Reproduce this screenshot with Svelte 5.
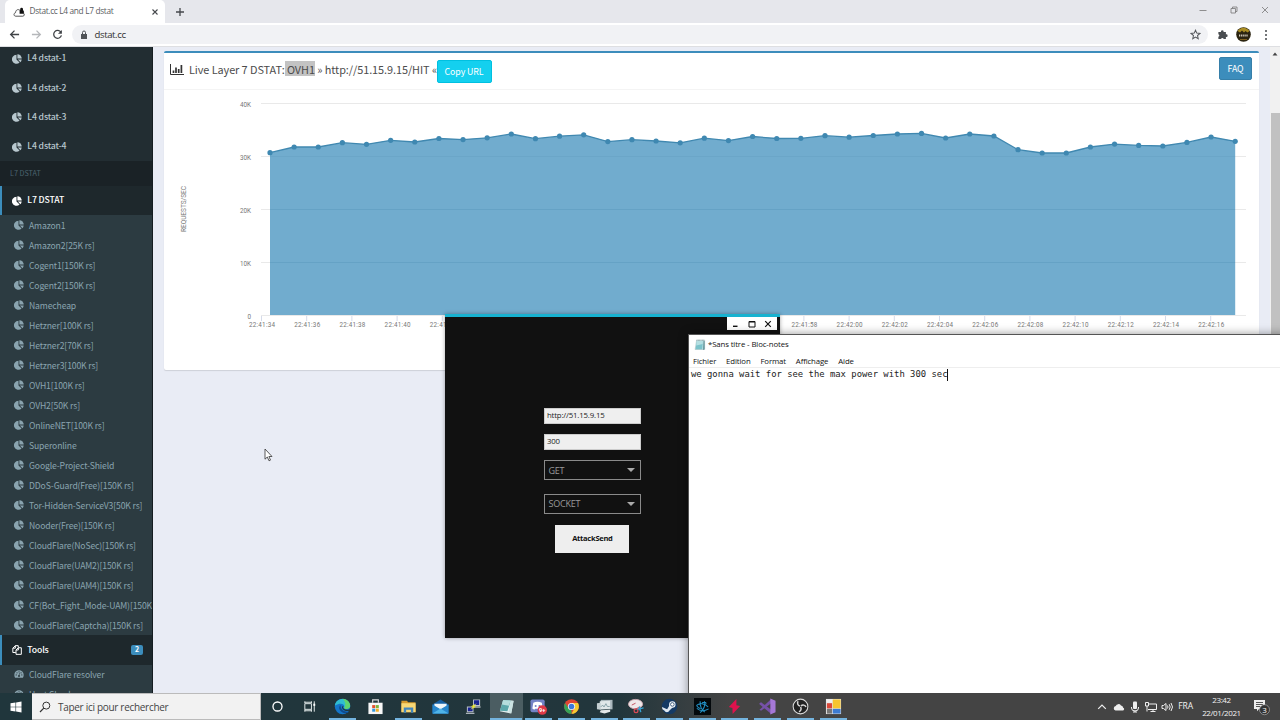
<script>
    const l4 = ['L4 dstat-1', 'L4 dstat-2', 'L4 dstat-3', 'L4 dstat-4'];
    const l7 = [
        'Amazon1', 'Amazon2[25K rs]', 'Cogent1[150K rs]', 'Cogent2[150K rs]', 'Namecheap',
        'Hetzner[100K rs]', 'Hetzner2[70K rs]', 'Hetzner3[100K rs]', 'OVH1[100K rs]', 'OVH2[50K rs]',
        'OnlineNET[100K rs]', 'Superonline', 'Google-Project-Shield', 'DDoS-Guard(Free)[150K rs]',
        'Tor-Hidden-ServiceV3[50K rs]', 'Nooder(Free)[150K rs]', 'CloudFlare(NoSec)[150K rs]',
        'CloudFlare(UAM2)[150K rs]', 'CloudFlare(UAM4)[150K rs]', 'CF(Bot_Fight_Mode-UAM)[150K',
        'CloudFlare(Captcha)[150K rs]'
    ];
    const tools = ['CloudFlare resolver', 'Host Check'];

    // chart
    const heights = [
        152.7, 147, 147, 142.7, 144.3, 140.3, 142, 138.5, 139.6, 137.8, 134, 138.7, 136.2, 134.8,
        141.6, 139.7, 141, 142.8, 138.2, 140.6, 136.5, 138.5, 138.3, 135.7, 137.2, 135.5, 134, 133.4,
        138, 134, 136, 149.7, 153, 153, 147, 144.1, 145.4, 146, 142.4, 137, 141.3
    ];
    const points = heights.map((y, i) => ({ x: 270 + i * 24.13, y }));
    const line = points.map((p) => `${p.x.toFixed(1)},${p.y}`).join(' ');
    const grid = [
        { y: 103.5, label: '40K' },
        { y: 156.5, label: '30K' },
        { y: 209.5, label: '20K' },
        { y: 262.5, label: '10K' },
        { y: 315.5, label: '0' }
    ];
    const ticks = Array.from({ length: 22 }, (_, i) => {
        const s = 34 + i * 2;
        return { x: 262 + i * 45.2, label: `22:${s < 60 ? 41 : 42}:${String(s % 60).padStart(2, '0')}` };
    });

    const menu = ['Fichier', 'Edition', 'Format', 'Affichage', 'Aide'];

    const apps = [
        { name: 'cortana' }, { name: 'view' }, { name: 'edge', open: true }, { name: 'store' },
        { name: 'explorer', open: true }, { name: 'mail' }, { name: 'putty' },
        { name: 'notepad', open: true, active: true }, { name: 'discord', open: true },
        { name: 'chrome', open: true }, { name: 'monitor', open: true }, { name: 'snip', open: true },
        { name: 'steam', open: true }, { name: 'bnet', open: true }, { name: 'bolt', open: true },
        { name: 'vs', open: true }, { name: 'obs', open: true }, { name: 'forms', open: true }
    ];
</script>

{#snippet pie()}
    <svg class="pie" viewBox="0 0 16 16">
        <path fill="currentColor" d="M7.200 1.200v7.400l4.900 5A7.200 7.200 0 1 1 7.200 1.200z" />
        <path fill="currentColor" d="M8.600 0.300A7 7 0 0 1 15.600 7.200H8.600z" />
        <path fill="currentColor" d="M9.300 8.800h6.200a7.300 7.300 0 0 1-2 4.200z" />
    </svg>
{/snippet}

{#snippet gauge()}
    <svg class="pie" viewBox="0 0 16 16">
        <path fill="currentColor" d="M8 2a7.500 7.500 0 0 0-7.500 7.500c0 1.700.500 3 1.200 4.300h12.600c.700-1.300 1.200-2.600 1.200-4.300A7.500 7.500 0 0 0 8 2z" />
        <g fill="#2c3b41"><circle cx="3.500" cy="9.500" r="1" /><circle cx="4.800" cy="6" r="1" /><circle cx="8" cy="4.500" r="1" /><circle cx="11.300" cy="6" r="1" /><circle cx="12.500" cy="9.500" r="1" /><circle cx="8" cy="11" r="1.600" /></g>
        <path stroke="#2c3b41" d="M8 11l1.200-5" />
    </svg>
{/snippet}

{#snippet notepad()}
    <svg viewBox="0 0 16 16">
        <path fill="#d5ecee" stroke="#8fa9ac" stroke-width=".6" d="M3.500 1.500h10.700v12.500H1.500z" />
        <path fill="#7cc3ca" d="M3.800 2.500h8.200l-.8 11H2z" />
        <path fill="#b5dfe2" d="M3.800 2.500h8.200l-.3 4-8.600 2z" />
        <path stroke="#5c7d82" stroke-width=".9" stroke-dasharray="1 .8" d="M3.500 1.700h10" />
        <path fill="#5b8d93" d="M12.600 2.500h1.500v11.200l-2 .8z" />
    </svg>
{/snippet}

<div class="desktop">
    <div class="browser">
        <div class="tabstrip">
            <div class="tab">
                <svg class="favicon" viewBox="0 0 12 12">
                    <path fill="#fff" stroke="#444" stroke-width=".9" d="M2.800 10.200C.5 10.200.4 7.200 2.500 6.700 2.800 3.500 5.500 2.800 7 4.500c3-.5 4 1.200 3.500 2.700 1.300.8.900 3-.7 3z" />
                    <path fill="#111" d="M7.200 4.500V3.200a1.400 1.400 0 0 1 2.800 0v1.300h.7v3.200H6.600V4.500z" />
                </svg>
                <span>Dstat.cc L4 and L7 dstat</span>
                <svg class="close" viewBox="0 0 8 8"><path stroke="#45484c" stroke-width="1.100" d="M1.500 1.500l5 5M6.500 1.500l-5 5" /></svg>
            </div>
            <svg class="plus" viewBox="0 0 10 10"><path stroke="#45484c" stroke-width="1.300" d="M5 1v8M1 5h8" /></svg>
            <div class="winbtns">
                <svg viewBox="0 0 8 8"><path stroke="#777" stroke-width=".8" d="M.5 4.500h7" /></svg>
                <svg viewBox="0 0 8 8"><path fill="none" stroke="#777" stroke-width=".8" d="M1 2.500h4.500V7H1zM2.500 2.500V1H7v4.500H5.500" /></svg>
                <svg viewBox="0 0 8 8"><path stroke="#777" stroke-width=".8" d="M1 1l6 6M7 1L1 7" /></svg>
            </div>
        </div>
        <div class="toolbar">
            <svg viewBox="0 0 12 12"><path fill="none" stroke="#3f4246" stroke-width="1.400" d="M11 6H2M6 1.800L1.800 6 6 10.200" /></svg>
            <svg viewBox="0 0 12 12"><path fill="none" stroke="#b5b7ba" stroke-width="1.400" d="M1 6h9M6 1.800L10.200 6 6 10.200" /></svg>
            <svg viewBox="0 0 12 12"><path fill="none" stroke="#3f4246" stroke-width="1.400" d="M9.800 3.500A4.300 4.300 0 1 0 10.300 7" /><path fill="#3f4246" d="M10.800 1v4.300H6.500z" /></svg>
            <div class="omnibox">
                <svg class="lock" viewBox="0 0 8 10"><path fill="#505357" d="M1 4h6v5H1z" /><path fill="none" stroke="#505357" d="M2.500 4V2.500a1.500 1.500 0 0 1 3 0V4" /></svg>
                <span>dstat.cc</span>
                <svg class="star" viewBox="0 0 12 12"><path fill="none" stroke="#55585c" stroke-width="1.100" d="M6 1.300l1.400 3.200 3.500.3-2.700 2.300.8 3.500L6 8.800l-3 1.800.8-3.500L1.100 4.800l3.500-.3z" /></svg>
            </div>
            <svg class="puzzle" viewBox="0 0 12 12"><path fill="#4a4d51" d="M1.500 3.200h2.800a1.500 1.500 0 1 1 2.900 0H9.700v2.600a1.500 1.500 0 1 1 0 2.900V11H7.300a1.500 1.500 0 0 0-2.900 0H1.500V8.500a1.400 1.400 0 0 0 0-2.700z" /></svg>
            <svg class="avatar" viewBox="0 0 15 15">
                <circle cx="7.500" cy="7.500" r="7.300" fill="#2b2410" />
                <path fill="#a98c22" d="M1.500 4A7.300 7.300 0 0 1 13.500 4l-2 1.500-2-1.500-1.500 1.500L6 3.500 4 5.500z" />
                <path stroke="#d8d0c0" stroke-width="1.800" stroke-dasharray="1.300 .8" d="M3 8.500h9" />
                <path stroke="#80601d" d="M4 12.500h7" />
            </svg>
            <svg class="dots" viewBox="0 0 4 12"><g fill="#45484c"><circle cx="2" cy="2" r="1" /><circle cx="2" cy="6" r="1" /><circle cx="2" cy="10" r="1" /></g></svg>
        </div>

        <div class="page">
            <nav class="sidebar">
                {#each l4 as item}
                    <div class="item">{@render pie()}<span>{item}</span></div>
                {/each}
                <div class="section">L7 DSTAT</div>
                <div class="item active">{@render pie()}<span>L7 DSTAT</span></div>
                <div class="sub">
                    {#each l7 as item}
                        <div class="subitem">{@render pie()}<span>{item}</span></div>
                    {/each}
                </div>
                <div class="item active">
                    <svg class="files" viewBox="0 0 12 12"><path fill="none" stroke="#fff" stroke-width="1.200" d="M7.500 3V.8H4L1 3.800V9h3.500M4 .8v3H1M7.500 3.300L4.800 6v5.200h6.400V3.300zM7.600 3.300V6H4.800" /></svg>
                    <span>Tools</span>
                    <b class="badge">2</b>
                </div>
                <div class="sub">
                    {#each tools as item}
                        <div class="subitem">{@render gauge()}<span>{item}</span></div>
                    {/each}
                </div>
            </nav>

            <main>
                <section class="box">
                    <header>
                        <svg class="bars" viewBox="0 0 14 11"><path fill="none" stroke="#333" d="M.5 0v10.500H14" /><path stroke="#333" stroke-width="1.700" d="M3.500 9V6.500M6 9V3.500M8.700 9V5M11.400 9V1" /></svg>
                        <h3>Live Layer 7 DSTAT:<mark>&nbsp;OVH1</mark> » http://51.15.9.15/HIT «</h3>
                        <button class="copy">Copy URL</button>
                        <button class="faq">FAQ</button>
                    </header>
                    <svg class="chart" viewBox="164 90 1095 280">
                        {#each grid as g}
                            <path stroke="#e9e9e9" d="M261 {g.y}H1246" />
                            <text x="251" y={g.y + 3} text-anchor="end">{g.label}</text>
                        {/each}
                        <polygon fill="#3c8dbc" fill-opacity=".73" points="270,315 {line} 1235.200,315" />
                        {#each grid.slice(2, 4) as g}
                            <path stroke="#5f9dc0" stroke-opacity=".45" d="M270 {g.y}H1235" />
                        {/each}
                        <polyline fill="none" stroke="#4088b0" stroke-width="1.300" points={line} />
                        {#each points as p}
                            <circle cx={p.x} cy={p.y} r="2.600" fill="#3f88b1" />
                        {/each}
                        {#each ticks as t}
                            <path stroke="#d5dbea" d="M{t.x - 0.5} 316v5" />
                            <text x={t.x} y="327.300" text-anchor="middle" textLength="26" lengthAdjust="spacing">{t.label}</text>
                        {/each}
                        <text class="axis" transform="translate(186 209) rotate(-90)" text-anchor="middle" textLength="46" lengthAdjust="spacingAndGlyphs">REQUESTS/SEC</text>
                    </svg>
                </section>
            </main>
            <div class="scroll">
                <svg viewBox="0 0 6 4"><path fill="#444" d="M3 .5L5.500 3.500H.5z" /></svg>
                <div class="thumb"></div>
            </div>
        </div>
    </div>

    <div class="window sender">
        <div class="controls">
            <svg viewBox="0 0 8 8"><path stroke="#111" stroke-width="1.400" d="M2 6.300h4.500" /></svg>
            <svg viewBox="0 0 8 8"><path fill="none" stroke="#111" d="M1 1.500h6v5.500H1zM1 2h6" /></svg>
            <svg viewBox="0 0 8 8"><path stroke="#111" stroke-width="1.200" d="M1.200 1.200l5.600 5.600M6.800 1.200L1.200 6.800" /></svg>
        </div>
        <div class="fields">
            <div class="input">http://51.15.9.15</div>
            <div class="input">300</div>
            <div class="select"><span>GET</span><i></i></div>
            <div class="select second"><span>SOCKET</span><i></i></div>
            <div class="send">AttackSend</div>
        </div>
    </div>

    <div class="window notes">
        <div class="title">{@render notepad()}<span>*Sans titre - Bloc-notes</span></div>
        <div class="menu">
            {#each menu as m}<span>{m}</span>{/each}
        </div>
        <div class="text">we gonna wait for see the max power with 300 sec<i></i></div>
    </div>

    <svg class="cursor" viewBox="0 0 9 14"><path fill="#fff" stroke="#333" stroke-width=".8" d="M1 1v10.200l2.300-2.200 1.700 3.800 1.500-.7L4.900 8.500H8z" /></svg>

    <div class="taskbar">
        <div class="start">
            <svg viewBox="0 0 12 12"><path fill="#fff" d="M.5 2.200L5.500 1.500v4.200h-5zM6.100 1.400L11.500.6v5.100H6.100zM.5 6.300h5v4.200l-5-.7zM6.100 6.300h5.400v5.100l-5.400-.8z" /></svg>
        </div>
        <div class="search">
            <svg viewBox="0 0 12 12"><circle cx="7.300" cy="4.600" r="3.500" fill="none" stroke="#333" /><path stroke="#333" stroke-width="1.200" d="M4.800 7.200L1 11" /></svg>
            <span>Taper ici pour rechercher</span>
        </div>
        <div class="apps">
            {#each apps as app}
                <div class="app" class:open={app.open} class:current={app.active}>
                    <svg viewBox="0 0 18 18">
                        {#if app.name === 'cortana'}
                            <circle cx="9" cy="9" r="4.800" fill="none" stroke="#fff" stroke-width="1.400" />
                        {:else if app.name === 'view'}
                            <path fill="none" stroke="#e8eeee" d="M3 6h7v6H3zM3 5.500v-2M10 5.500v-2M3 12v2.500M10 12v2.500M3 4.500h7M3 13.500h7M13 3.500v11" /><path fill="#fff" d="M12 6h2v2.300h-2z" />
                        {:else if app.name === 'edge'}
                            <circle cx="9" cy="9" r="8.200" fill="#1475c9" />
                            <path fill="#30bdd0" d="M1 8C2-1 15-1.500 17 8c0 4-6 4.500-6.500 2C12 7 8 4 1 8z" />
                            <path fill="#5ed36f" d="M9 .8c5.500 0 9 5 8 8.500-1 3-5.500 2.700-6.300 1C13 8 12 3 9 .8z" />
                            <path fill="#114a8c" d="M7 7.500c-4 3 .5 9.500 6.500 8.500 1-.3 2-1 2.500-2-5 2-9.500-2-9-6.500z" />
                            <path fill="#22363c" d="M10 8.500a2 2 0 0 0 .5 3c2 1.500 5 1.200 6.500.2L16 13.500c-4 1-8-1-7.500-4.500z" />
                        {:else if app.name === 'store'}
                            <path fill="#f7f7f7" d="M1.500 5h15v12h-15z" /><path fill="none" stroke="#ddd" stroke-width="1.200" d="M6 5V2h6v3" />
                            <path fill="#e34f2e" d="M5.500 7.500h3.200v3.200H5.500z" /><path fill="#7cb53b" d="M9.300 7.500h3.200v3.200H9.300z" /><path fill="#3297dc" d="M5.500 11.300h3.200v3.200H5.500z" /><path fill="#f0ae28" d="M9.300 11.300h3.200v3.200H9.300z" />
                        {:else if app.name === 'explorer'}
                            <path fill="#d69a2d" d="M1.500 3h6l1 1.500h8V15h-15z" /><path fill="#f7d775" d="M1.500 5.500h15V15h-15z" /><path fill="#4286bd" d="M4 15.500V10h10v5.500h-2.500V12.500h-5v3z" />
                        {:else if app.name === 'mail'}
                            <path fill="#1660a4" d="M.5 7L9 1.500 17.500 7v9.500H.5z" /><path fill="#eef6fb" d="M2.500 6h13v3L9 12.500 2.500 9z" /><path fill="#2786cc" d="M.5 7L9 12l8.500-5v9.500H.5z" /><path fill="#4fb4e8" d="M.5 16.500L9 11.200l8.500 5.300z" />
                        {:else if app.name === 'putty'}
                            <path fill="#bcc3c8" d="M8.500 1.500h7.500V8.500H8.500zM2 9h7v6H2z" /><path fill="#172395" d="M9.500 2.500H15v5H9.500zM3 10h5v4H3z" /><path fill="#aab2b8" d="M9.500 8.800h7v1.500h-7zM1 15.700h9V17H1z" /><path fill="#f4ed28" d="M12.500 5.500l-6.500 3.500 2.700.2L5.500 12.500l6.500-3.500-2.700-.2z" />
                        {:else if app.name === 'notepad'}
                            <path fill="#e7f3f3" d="M5.500 2l11 1-2.500 13.500L2 14z" /><path fill="#5ba8ab" d="M5.500 2l8 .8L10 14l-8-.5z" /><path fill="#b5dddd" d="M5.500 2l8 .8-2 5.500L4 7z" /><path fill="#cbe3e3" d="M13.500 3l3 .2-2.500 13-3-1.200z" />
                        {:else if app.name === 'discord'}
                            <rect x=".5" y="1.500" width="15" height="13.500" rx="2" fill="#7382c6" /><path fill="#fff" d="M3.500 5c3-1.500 6-1.500 9 0l1 6-2 1.500-1-1H5.500l-1 1L2.500 11z" /><circle cx="6" cy="8.500" r="1.100" fill="#7382c6" /><circle cx="10" cy="8.500" r="1.100" fill="#7382c6" /><circle cx="13" cy="12.800" r="5" fill="#df3947" /><text x="13" y="15" text-anchor="middle" class="count">9+</text>
                        {:else if app.name === 'chrome'}
                            <circle cx="9" cy="9" r="7.800" fill="#df4434" /><path fill="#f5ca31" d="M9 5.300h6.900A7.800 7.800 0 0 1 9 16.800l3.300-6z" /><path fill="#35a357" d="M2.200 5.200L6 11l3 1.500L9 16.800A7.800 7.800 0 0 1 2.200 5.200z" /><circle cx="9" cy="9" r="3.800" fill="#fff" /><circle cx="9" cy="9" r="3" fill="#3c78dc" />
                        {:else if app.name === 'monitor'}
                            <path fill="#a9b7bc" d="M5 2h12.500v10H5z" /><path fill="#dfe7e9" d="M4 3.500l11-.7v8.700l-11 .7z" /><path fill="#c3ced1" d="M1 5.500l4-.5v7.500L1 12z" /><path fill="none" stroke="#7c9aa0" stroke-width=".9" d="M5 9.500l2-2 1.500 2L10.500 6l1.500 3h2.500" /><path fill="#e4e8e9" d="M5 13l10-.5v2L9 16.500 4 15z" />
                        {:else if app.name === 'snip'}
                            <ellipse cx="8" cy="6.500" rx="7.500" ry="5" fill="#efe8ea" stroke="#c9a6ad" /><path fill="none" stroke="#c04d5a" d="M4 7.500l4-2M8 11.500l5-2" /><circle cx="8.500" cy="13.500" r="2" fill="none" stroke="#d84a55" stroke-width="1.300" /><path fill="none" stroke="#37a2d2" stroke-width="1.500" d="M12 9l1.500 6M10 12l6.500-1.500" />
                        {:else if app.name === 'steam'}
                            <circle cx="9" cy="9" r="8.200" fill="#153a64" /><path fill="#dfe8f1" d="M1 9.500l5.500 2.300L9.500 7l3 2.800L9 13.200a3 3 0 0 1-5.500 0L1.500 12z" /><circle cx="12" cy="6.800" r="3.400" fill="#eef3f7" /><circle cx="12" cy="6.800" r="1.900" fill="#fff" stroke="#153a64" stroke-width=".8" />
                        {:else if app.name === 'bnet'}
                            <path fill="#03080b" d="M0 0h18v18H0z" /><g fill="none" stroke="#2391c6" stroke-width="1.100"><path d="M2.500 8c3-3 9-2.500 12.500 1.500M3 11c4 3.500 9 2.500 12.500.5M6.500 3.500C6 8 8 13 11.500 15M11 3.500c1.500 3-.5 9-4.500 12M3 8.500c1 1.500 2.500 2.500 4 3M8.500 5c2.500-1 4-.5 4.500 1" /></g>
                        {:else if app.name === 'bolt'}
                            <path fill="#df124d" d="M11 1L3 9.500l3.800 1L7 17l8-8.500-4-.8z" />
                        {:else if app.name === 'vs'}
                            <path fill="#7651a8" d="M.5 5.500L2.200 4.500 13 12.500V17L.5 6.500zM.5 12.500L13 1v4.500L2.200 13.500z" /><path fill="#a678d8" d="M12 .5L17.500 2.800v12.400L12 17.500z" />
                        {:else if app.name === 'obs'}
                            <circle cx="9" cy="9" r="7.800" fill="#222" stroke="#d9d9d9" stroke-width="1.100" /><g fill="none" stroke="#d5d5d5" stroke-width="1.600"><path d="M8.500 8.500a3.200 3.200 0 0 1-2-5M9.500 8.500a3.200 3.200 0 0 1 5.300 1M9 9.500a3.200 3.200 0 0 1-1.700 5" /></g>
                        {:else}
                            <path fill="#e7e7e7" d="M1 1h16v16H1z" /><path fill="#f0f0f0" d="M2 2h5.500v3H2z" /><path fill="#d94739" d="M2 5.500h5.500V11H2z" /><path fill="#f6c52f" d="M8.200 1.500h8.300V11H8.200z" /><path fill="#777" d="M2 11.500h5.500v5H2z" /><path fill="#3c7bd2" d="M8.200 11.500h8.300v5H8.200z" />
                        {/if}
                    </svg>
                </div>
            {/each}
        </div>
        <div class="tray">
            <svg viewBox="0 0 12 12"><path fill="none" stroke="#eee" stroke-width="1.200" d="M2.200 7.800L6 4l3.800 3.800" /></svg>
            <svg viewBox="0 0 12 12"><path fill="#eee" d="M2.500 9.500a2.300 2.300 0 0 1 .2-4.500A3 3 0 0 1 8 4.500a2.500 2.500 0 0 1 2.200 2.200 1.500 1.500 0 0 1 0 2.800z" /></svg>
            <svg viewBox="0 0 12 12"><rect x="4" y=".5" width="4" height="7.500" rx="1" fill="#eee" /><path fill="none" stroke="#eee" d="M2.500 6v1a3.500 3 0 0 0 7 0V6M6 9.500v1.500M4 11h4" /></svg>
            <svg viewBox="0 0 12 12"><path fill="none" stroke="#eee" d="M4 3h7.500v5.500H3M8 8.500v2M5.500 10.500h5M.5 1.500h3V5h-3zM2 5v5.500" /></svg>
            <svg viewBox="0 0 12 12"><path fill="none" stroke="#eee" d="M1 4.500h1.500L5 2.500v7L2.500 7.500H1zM6.500 4.500q1 1.500 0 3M8.200 3.200q2 2.800 0 5.600M10 2q3 4 0 8" /></svg>
            <span class="lang">FRA</span>
            <div class="clock"><span>23:42</span><span>22/01/2021</span></div>
            <svg class="action" viewBox="0 0 18 18"><path fill="#eee" d="M1 2h11v9H6l-2 2.200V11H1z" /><path stroke="#444" stroke-width=".9" d="M3 4.500h7M3 6.500h7M3 8.500h4" /><circle cx="11.500" cy="11.700" r="5" fill="#343434" stroke="#bbb" stroke-width=".6" /><text x="11.500" y="14.600" text-anchor="middle">3</text></svg>
        </div>
    </div>
</div>

<style>
    :global(body) {
        overflow: hidden;
    }

    .desktop {
        position: relative;
        width: 1280px;
        height: 720px;
        overflow: hidden;
        display: flex;
        flex-direction: column;
        font-family: "Noto Sans CJK SC", "Noto Sans", sans-serif;
        line-height: 1;
    }

    .desktop * {
        box-sizing: border-box;
        white-space: nowrap;
    }

    svg {
        display: block;
        flex: none;
    }

    .browser {
        flex: 1;
        min-height: 0;
        display: flex;
        flex-direction: column;
    }

    /* chrome */
    .tabstrip {
        height: 23px;
        background: #e6e7ec;
        display: flex;
        align-items: center;
    }

    .tab {
        width: 160px;
        height: 23px;
        margin-left: 5px;
        padding: 0 6px 0 8px;
        background: #fff;
        border-radius: 5px 5px 0 0;
        display: flex;
        align-items: center;
        font-family: "Open Sans", sans-serif;
        font-size: 8.3px;
        color: #5a5d61;
    }

    .tab span {
        margin-left: 4.5px;
        letter-spacing: -.33px;
    }

    .favicon {
        width: 12px;
        height: 12px;
    }

    .close {
        width: 8px;
        height: 8px;
        margin-left: auto;
    }

    .plus {
        width: 10px;
        height: 10px;
        margin-left: 10px;
    }

    .winbtns {
        display: flex;
        gap: 23px;
        margin: -4px 11.5px 0 auto;
    }

    .winbtns svg {
        width: 8px;
        height: 8px;
    }

    .toolbar {
        height: 24px;
        background: #fff;
        border-bottom: 1px solid #dedfe2;
        display: flex;
        align-items: center;
        padding-left: 9px;
    }

    .toolbar > svg {
        width: 11px;
        height: 11px;
        margin-right: 10.5px;
    }

    .omnibox {
        width: 1135.5px;
        height: 19px;
        margin-left: -1.5px;
        padding: 0 6.5px 0 8px;
        border-radius: 10px;
        background: #f1f2f5;
        display: flex;
        align-items: center;
        font-family: "Open Sans", sans-serif;
        font-size: 9.6px;
        color: #333;
    }

    .omnibox span {
        margin-left: 6.5px;
        letter-spacing: -.4px;
    }

    .lock {
        width: 8px;
        height: 10px;
    }

    .star {
        width: 11px;
        height: 11px;
        margin-left: auto;
    }

    .toolbar .puzzle {
        margin: 0 8.5px 0 9px;
    }

    .toolbar .avatar {
        width: 15px;
        height: 15px;
        margin-right: 12.5px;
    }

    .toolbar .dots {
        width: 4px;
        height: 12px;
        margin: 0;
    }

    .page {
        flex: 1;
        min-height: 0;
        display: flex;
        overflow: hidden;
        background: #e9ecf5;
    }

    /* sidebar */
    .sidebar {
        width: 153px;
        flex: none;
        overflow: hidden;
        background: #222d32;
        border-right: 1px solid #151d21;
        margin-top: -3px;
    }

    .item {
        height: 29.3px;
        padding-left: 12px;
        display: flex;
        align-items: center;
        font-size: 8.7px;
        font-weight: 500;
        letter-spacing: -.15px;
        color: #b8c7ce;
    }

    .item span {
        margin-left: 5.3px;
    }

    .pie {
        width: 10px;
        height: 10px;
    }

    .section {
        height: 24.9px;
        padding-left: 10px;
        background: #1a2226;
        color: #4b646f;
        font-size: 7.2px;
        line-height: 25px;
    }

    .active {
        padding-left: 10px;
        border-left: 2px solid #3c8dbc;
        background: #1e282c;
        color: #fff;
    }

    .sub {
        background: #2c3b41;
    }

    .subitem {
        height: 20px;
        padding: 0 0 1px 13.5px;
        display: flex;
        align-items: center;
        font-size: 8.65px;
        letter-spacing: -.14px;
        color: #8aa4af;
    }

    .subitem span {
        margin-left: 5.5px;
    }

    .files {
        width: 10px;
        height: 10px;
    }

    .badge {
        width: 12px;
        height: 10px;
        margin: 0 9px 0 auto;
        border-radius: 2px;
        background: #3c8dbc;
        font-size: 7px;
        line-height: 9.5px;
        text-align: center;
    }

    /* panel */
    main {
        flex: 1;
        padding: 4px 11px 0 10.5px;
    }

    .box {
        height: 319px;
        background: #fff;
        border-top: 2px solid #3c8dbc;
        border-radius: 2px;
        box-shadow: 0 1px 1px rgba(0, 0, 0, .12);
    }

    header {
        height: 37px;
        padding: 3px 7px 0 6.5px;
        display: flex;
        align-items: flex-start;
        border-bottom: 1px solid #f4f4f4;
    }

    .bars {
        width: 14px;
        height: 11px;
        margin-top: 8px;
    }

    h3 {
        width: 248px;
        height: 17px;
        margin: 5px 0 0 5px;
        font-size: 10.9px;
        line-height: 16px;
        font-weight: 400;
        letter-spacing: -.07px;
        color: #4c4c4c;
    }

    mark {
        display: inline-block;
        height: 15px;
        line-height: 16px;
        color: inherit;
        background: #c3c3c3;
    }

    button {
        border: 1px solid #00c0e0;
        border-radius: 2px;
        padding: 0;
        color: #fff;
        font-family: inherit;
        font-size: 8.8px;
        letter-spacing: -.1px;
    }

    .copy {
        width: 55px;
        height: 23px;
        margin: 4px 0 0 -.5px;
        background: #14d0ef;
    }

    .faq {
        width: 33px;
        height: 23px;
        margin: 1px 0 0 auto;
        background: #3c8dbc;
        border-color: #367fa9;
    }

    .chart {
        width: 1095px;
        height: 280px;
    }

    .chart text {
        font-family: Roboto, sans-serif;
        font-size: 6.3px;
        fill: #777;
    }

    .chart .axis {
        font-size: 7px;
    }

    .scroll {
        width: 10px;
        background: #f1f1f1;
        display: flex;
        flex-direction: column;
        align-items: center;
    }

    .scroll svg {
        width: 6px;
        height: 4px;
        margin: 4.5px 0 57.5px;
    }

    .thumb {
        width: 9px;
        flex: 1;
        background: #c1c1c1;
    }

    /* windows over the browser */
    .window {
        position: absolute;
    }

    .sender {
        left: 445.4px;
        top: 314px;
        width: 334.6px;
        height: 324px;
        border-top: 3px solid #17b2d0;
        background: #111;
        box-shadow: 0 0 4px rgba(0, 0, 0, .35);
        font-family: "Open Sans", sans-serif;
    }

    .controls {
        width: 50.5px;
        height: 13px;
        margin-left: 281.6px;
        padding-right: 1px;
        background: #fff;
        display: flex;
        align-items: center;
        justify-content: space-around;
    }

    .controls svg {
        width: 8px;
        height: 8px;
    }

    .fields {
        width: 97px;
        margin: 77.5px 0 0 99px;
        display: flex;
        flex-direction: column;
    }

    .input {
        height: 16px;
        margin-bottom: 10.5px;
        padding-left: 1.5px;
        border: 1px solid #ccc;
        background: #efefef;
        color: #222;
        font-size: 7.8px;
        line-height: 13px;
        letter-spacing: -.15px;
    }

    .select {
        height: 20px;
        margin-top: -.5px;
        padding: 0 5px 0 3px;
        border: 1px solid #8a8a8a;
        color: #999;
        font-size: 9px;
        display: flex;
        align-items: center;
        justify-content: space-between;
        letter-spacing: -.2px;
    }

    .select i {
        border: 4px solid transparent;
        border-top-color: #aaa;
        border-bottom: 0;
    }

    .select.second {
        margin-top: 13.5px;
    }

    .send {
        width: 74px;
        height: 27.5px;
        margin: 11.5px 0 0 11px;
        background: #eee;
        color: #111;
        font-size: 7.5px;
        font-weight: 700;
        line-height: 27px;
        text-align: center;
        letter-spacing: -.25px;
    }

    .notes {
        left: 688px;
        top: 334px;
        width: 600px;
        height: 370px;
        background: #fff;
        border: 1px solid #555;
        box-shadow: 0 0 9px rgba(0, 0, 0, .4);
        font-family: "Open Sans", sans-serif;
        font-size: 7.8px;
        color: #111;
    }

    .title {
        height: 19px;
        padding-left: 5px;
        display: flex;
        align-items: center;
    }

    .title svg {
        width: 12px;
        height: 12px;
        margin-right: 2px;
    }

    .title span {
        letter-spacing: -.12px;
    }

    .menu {
        height: 13.5px;
        padding: 3px 0 0 4px;
        display: flex;
        align-items: center;
        gap: 9.9px;
        border-bottom: 1px solid #eee;
        letter-spacing: -.12px;
    }

    .text {
        padding: 1px 0 0 2px;
        display: flex;
        font-family: "DejaVu Sans Mono", monospace;
        font-size: 8.9px;
        line-height: 11px;
        color: #222;
    }

    .text i {
        width: 1px;
        height: 12px;
        background: #111;
    }

    .cursor {
        position: absolute;
        left: 264px;
        top: 448px;
        width: 9px;
        height: 14px;
    }

    /* taskbar */
    .taskbar {
        position: relative;
        height: 27px;
        flex: none;
        display: flex;
        background: linear-gradient(90deg, #20363c 0, #22363c 620px, #444 730px);
    }

    .start {
        width: 32px;
        display: grid;
        place-items: center;
    }

    .start svg {
        width: 12px;
        height: 12px;
    }

    .search {
        width: 229px;
        border: 1px solid #bbb;
        border-left: 0;
        background: #f2f2f2;
        padding-left: 7px;
        display: flex;
        align-items: center;
        font-family: "Open Sans", sans-serif;
        font-size: 10px;
        color: #444;
    }

    .search svg {
        width: 12px;
        height: 12px;
        margin-right: 7px;
    }

    .search span {
        letter-spacing: -.3px;
    }

    .apps {
        display: flex;
    }

    .app {
        width: 32.7px;
        display: flex;
        justify-content: center;
        align-items: center;
        border-bottom: 2px solid transparent;
        background-clip: padding-box;
    }

    .app svg {
        width: 17px;
        height: 17px;
        margin-top: 2px;
    }

    .open {
        background: linear-gradient(#74b4df, #74b4df) center bottom / 27px 2px no-repeat border-box;
    }

    .current {
        background-color: #4b5d62;
        background-size: 32px 2px;
    }

    .count {
        font: 700 6px Roboto, sans-serif;
        fill: #fff;
    }

    .tray {
        margin-left: auto;
        padding-right: 9.5px;
        display: flex;
        align-items: center;
        color: #f3f3f3;
        font-family: "Open Sans", sans-serif;
        font-size: 8px;
    }

    .tray > svg {
        width: 12px;
        height: 12px;
        margin-right: 4.2px;
    }

    .lang {
        margin-left: 1px;
        font-size: 8.5px;
        letter-spacing: -.1px;
    }

    .clock {
        width: 40px;
        margin: -1px 11px 0 8.5px;
        display: flex;
        flex-direction: column;
        align-items: center;
        gap: 5px;
        letter-spacing: -.38px;
    }

    .tray .action {
        width: 18px;
        height: 18px;
        margin: 0;
    }

    .action text {
        font-size: 8px;
        fill: #fff;
    }
</style>
